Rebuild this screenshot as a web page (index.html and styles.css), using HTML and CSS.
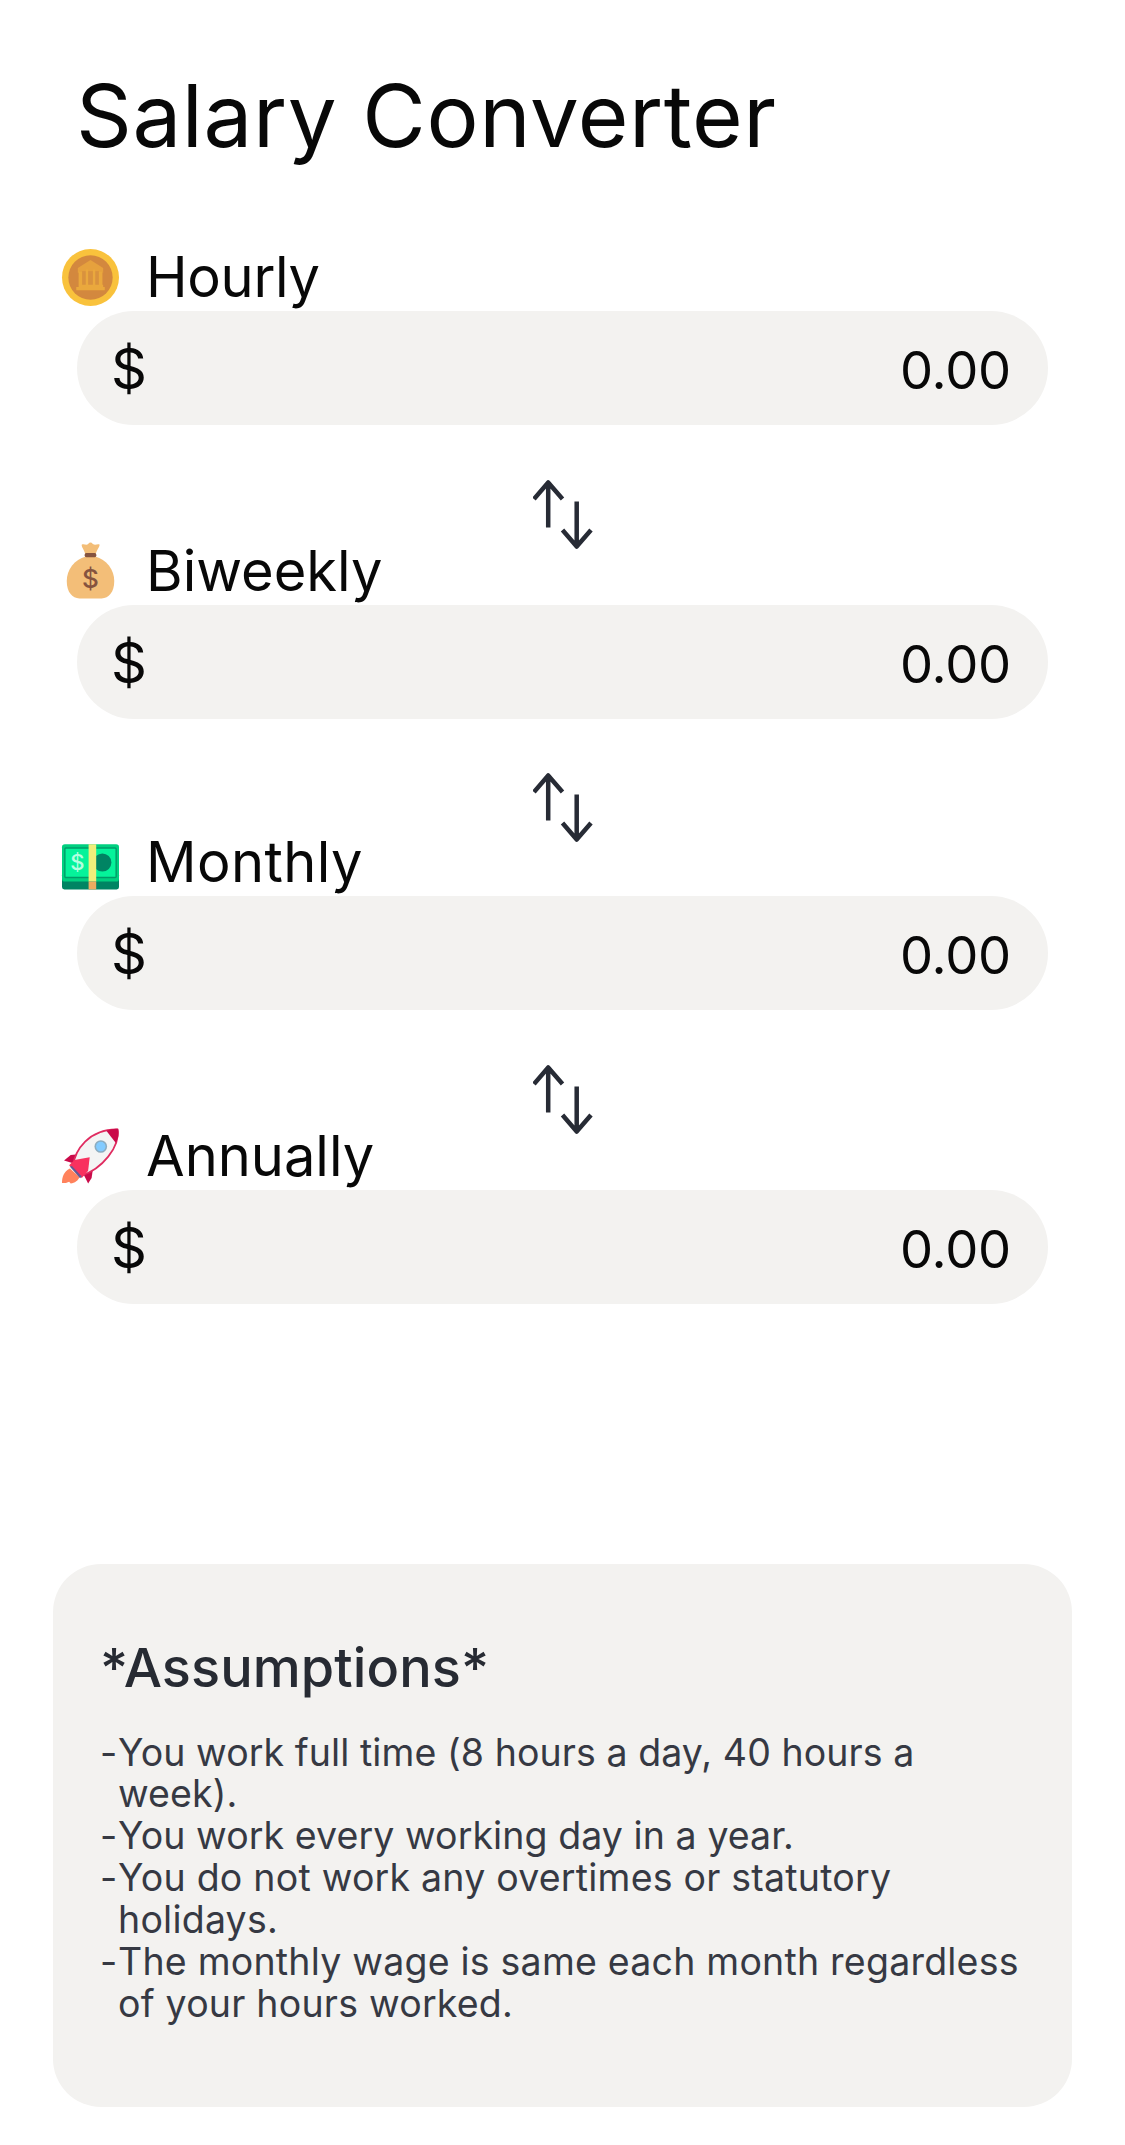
FILE: index.html
```
<!DOCTYPE html>
<html lang="en">
<head>
<meta charset="utf-8">
<title>Salary Converter</title>
<link rel="stylesheet" href="styles.css">
</head>
<body>
<svg class="defs" aria-hidden="true">
  <symbol id="swap" viewBox="0 0 60 70">
    <path d="M15.200 47.500V2.500M1 19 15.200 2.500 29.500 19M43.700 21.500V66.500M29.500 50 43.700 66.500 58 50" fill="none" stroke="#272b35" stroke-width="4.500" stroke-linejoin="round"/>
  </symbol>
</svg>
<main class="page">
  <h1 class="title">Salary Converter</h1>
  <form class="converter">
    <section class="field">
      <label class="label label-hourly" for="hourly">
        <svg class="emoji" viewBox="0 0 36 36">
          <circle cx="18" cy="18" r="18" fill="#f9c23c"/>
          <circle cx="18" cy="18" r="14" fill="#d3883e"/>
          <path d="M18 7 26 12V15H10V12Z" fill="#e6a13d"/>
          <path d="M10.700 14H25.500V24H10.700Z" fill="#d9923e"/>
          <path d="M10.500 14H12.700V23H10.500ZM15 13H16.500V23H15ZM19.500 13H21V23H19.500ZM23.300 14H25.500V23H23.300ZM10.500 22.500H26V24H27V26H9V24H10.500Z" fill="#eaa83d"/>
        </svg>
        <span>Hourly</span>
      </label>
      <div class="amount"><span class="currency">$</span><output id="hourly">0.00</output></div>
    </section>
    <svg class="swap"><use href="#swap"/></svg>
    <section class="field">
      <label class="label" for="biweekly">
        <svg class="emoji" viewBox="0 0 36 36">
          <path d="M12.500 1C14 .3 15.500 1.700 16.500 .6 17.500-.6 18.500-.6 19.500 .6 21 1.700 22.500 .3 23.700 1 24 2.500 21.500 4.500 21 8.500H15C14.500 4.500 12 2.500 12.500 1Z" fill="#f3be78"/>
          <path d="M15 8.500C8 10.500 3 16.500 3 24 3 31 6.500 35 11 35H25C29.500 35 33 31 33 24 33 16.500 28 10.500 21 8.500Z" fill="#f3be78"/>
          <rect x="14.300" y="6.300" width="7.400" height="2.700" rx="1.100" fill="#85533f"/>
          <text x="18" y="28.200" text-anchor="middle" class="bag-sign">$</text>
        </svg>
        <span>Biweekly</span>
      </label>
      <div class="amount"><span class="currency">$</span><output id="biweekly">0.00</output></div>
    </section>
    <svg class="swap swap-tight"><use href="#swap"/></svg>
    <section class="field">
      <label class="label label-monthly" for="monthly">
        <svg class="emoji" viewBox="0 0 36 36">
          <rect y="24.500" width="36" height="10.500" rx="1.500" fill="#008463"/>
          <rect y="6.500" width="36" height="23.500" rx="1.800" fill="#00d080"/>
          <rect x="1.800" y="8.800" width="32.400" height="18.700" rx=".7" fill="#05f39a" stroke="#009c69" stroke-width=".9"/>
          <circle cx="25.500" cy="18" r="5.700" fill="#008463"/>
          <text x="9.800" y="23" text-anchor="middle" class="note-sign">$</text>
          <rect x="16.800" y="6.500" width="4.800" height="23.500" fill="#f0ee7b"/>
          <rect x="16.800" y="30" width="4.800" height="5" fill="#efab60"/>
        </svg>
        <span>Monthly</span>
      </label>
      <div class="amount"><span class="currency">$</span><output id="monthly">0.00</output></div>
    </section>
    <svg class="swap"><use href="#swap"/></svg>
    <section class="field">
      <label class="label" for="annually">
        <svg class="emoji" viewBox="0 0 36 36">
          <path d="M5 25.500C1 27.500 0 31 0 34.800H2.500L4.500 34 5.500 35C8 35 10.500 33 11 31Z" fill="#ff825c"/>
          <path d="M10 16.500 5.500 17 1.300 20.500 8 22.500Z" fill="#ca0b4a"/>
          <path d="M19.500 26 18.700 31.500 16.500 35 13.500 29Z" fill="#ca0b4a"/>
          <path d="M7 24C8 14 17 .5 35 .8 37 12 25 26 12.500 30Z" fill="#f4f4f4" stroke="#e02b60" stroke-width="1.100"/>
          <path d="M28 1.700C31 .6 34 .1 35.500 .6 36.300 2.800 35.500 6.500 34 9.500Z" fill="#ca0b4a"/>
          <circle cx="24.500" cy="11.700" r="4" fill="#8cacc0"/>
          <circle cx="24.500" cy="11.700" r="3" fill="#83cbff"/>
          <path d="M4.500 23.500 7.800 20.200 17.500 18.500 16.500 27 12.500 31.500Z" fill="#f8315f"/>
          <path d="M4.900 24.300 6.300 24 12.500 30.600 11.400 31.700Z" fill="#635994"/>
        </svg>
        <span>Annually</span>
      </label>
      <div class="amount"><span class="currency">$</span><output id="annually">0.00</output></div>
    </section>
  </form>
  <section class="notes">
    <h2 class="notes-title">*Assumptions*</h2>
    <ul class="notes-list">
      <li>You work full time (8 hours a day, 40 hours a week).</li>
      <li>You work every working day in a year.</li>
      <li class="loose">You do not work any overtimes or statutory holidays.</li>
      <li class="loose">The monthly wage is same each month regardless of your hours worked.</li>
    </ul>
  </section>
</main>
</body>
</html>
```
FILE: styles.css
```
* { box-sizing: border-box; }
body {
  margin: 0;
  background: #fff;
  color: #080808;
  font-family: Inter, "Liberation Sans", sans-serif;
}
.defs { display: none; }
.page {
  width: 1125px;
  height: 2145px;
  padding: 62px 53px 0;
}
.title {
  margin: 0 0 73px 23px;
  font-size: 87px;
  font-weight: 400;
  line-height: 108px;
  letter-spacing: .6px;
  white-space: nowrap;
}
.converter {
  display: flex;
  flex-direction: column;
}
.field {
  display: flex;
  flex-direction: column;
}
.label {
  display: flex;
  align-items: center;
  gap: 27px;
  height: 68px;
  padding-left: 9px;
  font-size: 56px;
  line-height: 68px;
}
.label-hourly { letter-spacing: -.3px; }
.label-monthly { letter-spacing: .4px; }
.emoji {
  width: 57px;
  height: 57px;
  overflow: visible;
  letter-spacing: 0;
}
.bag-sign {
  font-size: 16.500px;
  font-weight: 500;
  fill: #85533f;
}
.note-sign {
  font-size: 14px;
  font-weight: 500;
  fill: #b4ffe0;
}
.amount {
  display: flex;
  align-items: center;
  justify-content: space-between;
  width: 971px;
  height: 114px;
  margin-left: 24px;
  padding: 2px 37px 0 34px;
  border-radius: 57px;
  background: #f3f2f0;
  font-size: 52.500px;
  letter-spacing: -.2px;
}
.amount output { padding-top: 2px; }
.currency { font-size: 56px; }
.swap {
  align-self: center;
  width: 60px;
  height: 70px;
  margin: 55px 0 -13px;
}
.swap-tight { margin: 54px 0 -15px; }
.notes {
  width: 1019px;
  height: 543px;
  margin-top: 260px;
  padding: 71px 47px 0;
  border-radius: 48px;
  background: #f3f2f0;
  color: #272b33;
}
.notes-title {
  margin: 0 0 30.500px;
  font-size: 54px;
  font-weight: 500;
  line-height: 66px;
  letter-spacing: .1px;
}
.notes-list {
  margin: 0;
  padding: 0;
  list-style: none;
  color: #363943;
  font-size: 37.500px;
  line-height: 41.870px;
  letter-spacing: .08px;
}
.notes-list li {
  display: flex;
}
.notes-list .loose { letter-spacing: .22px; }
.notes-list li::before {
  content: "-";
  flex: 0 0 18px;
}
```
